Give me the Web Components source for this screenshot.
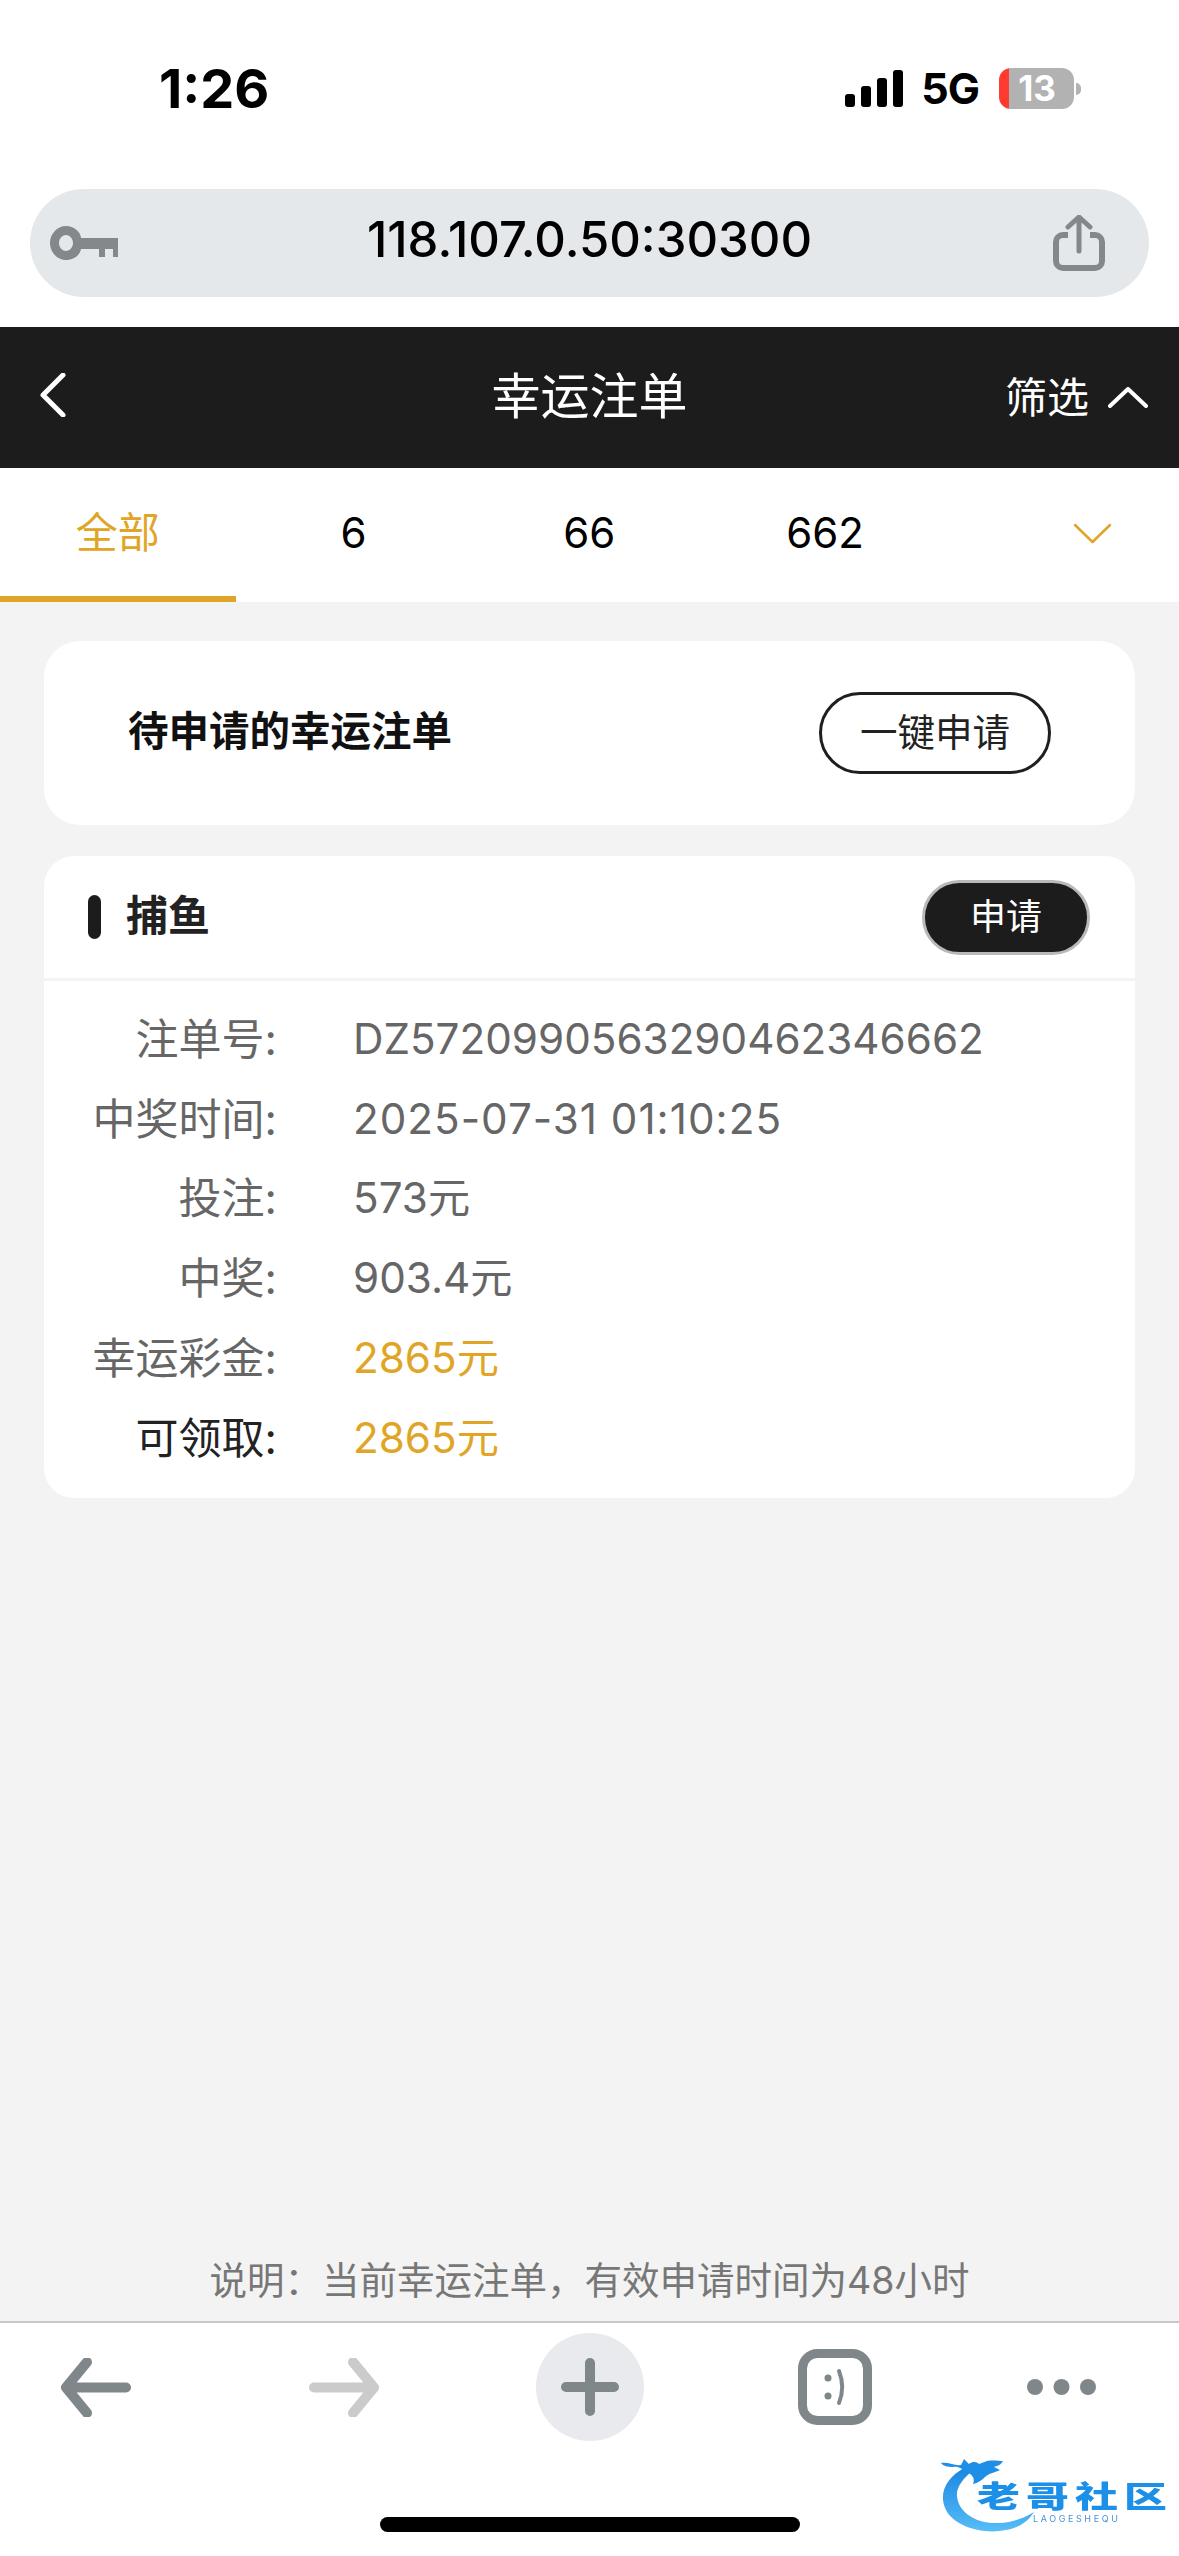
<!DOCTYPE html>
<html lang="zh">
<head>
<meta charset="utf-8">
<title>幸运注单</title>
<style>
  html, body { margin: 0; padding: 0; background: #fff; }
  body { width: 1179px; height: 2556px; overflow: hidden; font-family: Inter, "Noto Sans CJK SC", sans-serif; }
</style>
</head>
<body>
<lucky-page>
  <status-bar time="1:26" network="5G" battery="13"></status-bar>
  <url-bar address="118.107.0.50:30300"></url-bar>
  <nav-header heading="幸运注单" action="筛选"></nav-header>
  <filter-tabs items="全部,6,66,662"></filter-tabs>
  <apply-card heading="待申请的幸运注单" action="一键申请"></apply-card>
  <bet-card game="捕鱼" action="申请">
    <info-row label="注单号:" value="DZ5720990563290462346662"></info-row>
    <info-row label="中奖时间:" value="2025-07-31 01:10:25" spacing="1px"></info-row>
    <info-row label="投注:" value="573元"></info-row>
    <info-row label="中奖:" value="903.4元"></info-row>
    <info-row label="幸运彩金:" value="2865元" tone="gold"></info-row>
    <info-row label="可领取:" value="2865元" tone="gold" strong></info-row>
  </bet-card>
  <page-note>说明：当前幸运注单，有效申请时间为48小时</page-note>
  <browser-toolbar></browser-toolbar>
</lucky-page>

<script>
class LuckyPage extends HTMLElement {
  constructor() {
    super();
    this.attachShadow({ mode: "open" });
    this.shadowRoot.innerHTML = `
      <style>
        :host { display: block; width: 1179px; height: 2556px; background: #fff; position: relative; }
        .frame { display: flex; flex-direction: column; height: 100%; }
        .body { flex: 1; background: #f3f3f3; display: flex; flex-direction: column; padding: 39px 44px 0; gap: 31px; min-height: 0; }
        .note { margin-top: auto; height: 65px; }
      </style>
      <div class="frame">
        <slot name="top"></slot>
        <div class="body">
          <slot name="cards"></slot>
          <div class="note"><slot name="note"></slot></div>
        </div>
        <slot name="bottom"></slot>
      </div>
      <lucky-watermark></lucky-watermark>
    `;
  }

  connectedCallback() {
    for (const el of this.children) {
      const tag = el.localName;
      if (tag === "status-bar" || tag === "url-bar" || tag === "nav-header" || tag === "filter-tabs") el.slot = "top";
      if (tag === "apply-card" || tag === "bet-card") el.slot = "cards";
      if (tag === "page-note") el.slot = "note";
      if (tag === "browser-toolbar") el.slot = "bottom";
    }
  }
}

class StatusBar extends HTMLElement {
  constructor() {
    super();
    this.attachShadow({ mode: "open" });
  }

  connectedCallback() {
    const time = this.getAttribute("time") || "";
    const network = this.getAttribute("network") || "";
    const battery = this.getAttribute("battery") || "";
    this.shadowRoot.innerHTML = `
      <style>
        :host { display: flex; height: 189px; background: #fff; box-sizing: border-box; padding: 0 98px 12px 159px; align-items: center; justify-content: space-between; color: #000; }
        .time { font: 700 54px/1 Inter, sans-serif; }
        .right { display: flex; align-items: center; }
        svg { display: block; }
        .net { font: 700 43px/1 Inter, sans-serif; margin: 0 20px 0 18px; letter-spacing: -1px; }
        .battery { display: flex; align-items: center; }
        .cell { width: 75px; height: 41px; border-radius: 12px; overflow: hidden; background: linear-gradient(90deg, #ff3b30 10px, #b2b2b2 10px); color: #fff; font: 700 35px/41px Inter, sans-serif; text-align: center; text-indent: 1px; }
        .nub { width: 5px; height: 12px; margin-left: 2px; background: #b2b2b2; border-radius: 0 6px 6px 0; }
      </style>
      <span class="time">${time}</span>
      <div class="right">
        <svg width="58" height="37" viewBox="0 0 58 37" fill="#000">
          <rect x="0" y="24" width="10" height="13" rx="3"/>
          <rect x="16" y="16" width="10" height="21" rx="3"/>
          <rect x="32" y="8" width="10" height="29" rx="3"/>
          <rect x="48" y="0" width="10" height="37" rx="3"/>
        </svg>
        <span class="net">${network}</span>
        <div class="battery"><div class="cell">${battery}</div><div class="nub"></div></div>
      </div>
    `;
  }
}

class UrlBar extends HTMLElement {
  constructor() {
    super();
    this.attachShadow({ mode: "open" });
  }

  connectedCallback() {
    const address = this.getAttribute("address") || "";
    this.shadowRoot.innerHTML = `
      <style>
        :host { display: block; background: #fff; padding: 0 30px 30px; }
        .bar { height: 108px; border-radius: 54px; background: #e5e8eb; display: flex; align-items: center; justify-content: space-between; padding: 0 44px 0 20px; position: relative; }
        .addr { position: absolute; left: 0; right: 0; top: -3px; text-align: center; font: 500 49px/108px Inter, sans-serif; color: #000; }
        svg { display: block; position: relative; }
      </style>
      <div class="bar">
        <svg width="68" height="34" viewBox="0 0 68 34" fill="#82888b">
          <path fill-rule="evenodd" d="M16 0c9 0 15 7 15 12h37v19h-5v-8h-8v8h-6v-8H31c-1 6-7 11-15 11C7 34 0 26 0 17S7 0 16 0zm0 9c-4 0-7 4-7 8s3 8 7 8 7-4 7-8-3-8-7-8z"/>
        </svg>
        <span class="addr">${address}</span>
        <svg width="52" height="56" viewBox="0 0 52 56" fill="none" stroke="#82888b" stroke-width="6">
          <path d="M15 20H10a7 7 0 0 0-7 7v19a7 7 0 0 0 7 7h32a7 7 0 0 0 7-7V27a7 7 0 0 0-7-7h-5"/>
          <path d="M26 36V3M15 12 26 2l11 10" stroke-width="5" stroke-linecap="round" stroke-linejoin="round"/>
        </svg>
      </div>
    `;
  }
}

class NavHeader extends HTMLElement {
  constructor() {
    super();
    this.attachShadow({ mode: "open" });
  }

  connectedCallback() {
    const heading = this.getAttribute("heading") || "";
    const action = this.getAttribute("action") || "";
    this.shadowRoot.innerHTML = `
      <style>
        :host { display: grid; grid-template-columns: 1fr auto 1fr; align-items: center; height: 141px; background: #1c1c1c; color: #fff; padding: 0 31px; font-family: Inter, "Noto Sans CJK SC", sans-serif; }
        h1 { margin: 0; font-size: 49px; font-weight: 400; line-height: 1; position: relative; top: -1px; }
        .action { justify-self: end; display: flex; align-items: center; gap: 19px; font-size: 42px; line-height: 1; }
        svg { display: block; }
        .back { margin: -6px 0 0 9px; }
      </style>
      <svg class="back" width="26" height="44" viewBox="0 0 26 44" fill="none" stroke="#fff" stroke-width="5" stroke-linecap="round" stroke-linejoin="round"><path d="M23 2 3 22l20 20"/></svg>
      <h1>${heading}</h1>
      <div class="action"><span>${action}</span>
        <svg width="40" height="21" viewBox="0 0 40 21" fill="none" stroke="#fff" stroke-width="4" stroke-linecap="round" stroke-linejoin="round"><path d="M2 19 20 2l18 17"/></svg>
      </div>
    `;
  }
}

class FilterTabs extends HTMLElement {
  constructor() {
    super();
    this.attachShadow({ mode: "open" });
  }

  connectedCallback() {
    const items = (this.getAttribute("items") || "").split(",");
    const tabs = items.map((item, i) => `<div class="tab${i === 0 ? " on" : ""}">${item}</div>`).join("");
    this.shadowRoot.innerHTML = `
      <style>
        :host { display: grid; grid-template-columns: repeat(4, 235.75px) 1fr; height: 134px; background: #fff; font-family: Inter, "Noto Sans CJK SC", sans-serif; }
        .tab { display: flex; align-items: center; justify-content: center; font-size: 42px; line-height: 50px; color: #000; box-sizing: border-box; padding-top: 2px; border-bottom: 6px solid transparent; }
        .on { color: #e0a526; border-bottom-color: #e0a526; }
        .more { display: flex; align-items: center; justify-content: flex-end; padding: 0 67px 0 0; }
        svg { display: block; }
      </style>
      ${tabs}
      <div class="more">
        <svg width="39" height="21" viewBox="0 0 39 21" fill="none" stroke="#e0a526" stroke-width="2.5" stroke-linecap="round" stroke-linejoin="round" style="margin-top:-4px"><path d="M2 2l17.5 17L37 2"/></svg>
      </div>
    `;
  }
}

class ApplyCard extends HTMLElement {
  constructor() {
    super();
    this.attachShadow({ mode: "open" });
  }

  connectedCallback() {
    const heading = this.getAttribute("heading") || "";
    const action = this.getAttribute("action") || "";
    this.shadowRoot.innerHTML = `
      <style>
        :host { display: flex; align-items: center; justify-content: space-between; height: 184px; background: #fff; border-radius: 36px; padding: 0 84px; font-family: Inter, "Noto Sans CJK SC", sans-serif; }
        strong { font-size: 40.5px; font-weight: 700; color: #111; line-height: 50px; margin-top: -2px; }
        button { all: unset; box-sizing: border-box; width: 232px; height: 82px; border: 3px solid #1f1f1f; border-radius: 41px; text-align: center; font-size: 37.5px; line-height: 72px; color: #222; }
      </style>
      <strong>${heading}</strong>
      <button>${action}</button>
    `;
  }
}

class BetCard extends HTMLElement {
  constructor() {
    super();
    this.attachShadow({ mode: "open" });
  }

  connectedCallback() {
    const game = this.getAttribute("game") || "";
    const action = this.getAttribute("action") || "";
    this.shadowRoot.innerHTML = `
      <style>
        :host { display: block; background: #fff; border-radius: 30px; height: 642px; font-family: Inter, "Noto Sans CJK SC", sans-serif; }
        header { display: flex; align-items: center; height: 122px; padding: 0 45px 0 44px; border-bottom: 3px solid #f3f3f3; }
        .mark { width: 13px; height: 44px; border-radius: 7px; background: #1c1c1c; margin-right: 25px; }
        h2 { margin: -2px 0 0; flex: 1; font-size: 42px; line-height: 50px; font-weight: 700; color: #222; }
        button { all: unset; box-sizing: border-box; width: 168px; height: 75px; border-radius: 38px; background: #1c1c1c; border: 3px solid #b9b9b9; color: #fff; text-align: center; font-size: 36px; line-height: 69px; }
        .rows { padding: 18px 0 0; }
      </style>
      <header><span class="mark"></span><h2>${game}</h2><button>${action}</button></header>
      <div class="rows"><slot></slot></div>
    `;
  }
}

class InfoRow extends HTMLElement {
  constructor() {
    super();
    this.attachShadow({ mode: "open" });
  }

  connectedCallback() {
    const label = this.getAttribute("label") || "";
    const value = this.getAttribute("value") || "";
    const spacing = this.getAttribute("spacing") || "0";
    const gold = this.getAttribute("tone") === "gold";
    const strong = this.hasAttribute("strong");
    this.shadowRoot.innerHTML = `
      <style>
        :host { display: grid; grid-template-columns: 233px 1fr; column-gap: 76px; height: 79.8px; align-items: center; font-family: Inter, "Noto Sans CJK SC", sans-serif; font-size: 43px; line-height: 50px; }
        .k { text-align: right; color: ${strong ? "#222" : "#666"}; }
        .v { font-size: 42.2px; color: ${gold ? "#e0a526" : "#666"}; white-space: nowrap; letter-spacing: ${spacing}; }
      </style>
      <span class="k">${label}</span>
      <span class="v">${value}</span>
    `;
  }
}

class PageNote extends HTMLElement {
  constructor() {
    super();
    this.attachShadow({ mode: "open" });
    this.shadowRoot.innerHTML = `
      <style>
        :host { display: block; text-align: center; font-family: Inter, "Noto Sans CJK SC", sans-serif; font-size: 37.5px; line-height: 50px; color: #777; margin: 0 -44px; }
      </style>
      <slot></slot>
    `;
  }
}

class BrowserToolbar extends HTMLElement {
  constructor() {
    super();
    this.attachShadow({ mode: "open" });
    this.shadowRoot.innerHTML = `
      <style>
        :host { display: block; height: 235px; box-sizing: border-box; background: #fff; border-top: 2px solid #c8c8c8; }
        .icons { display: flex; align-items: center; height: 128px; }
        svg { display: block; flex: none; }
        .back { margin-left: 60px; }
        .forward { margin-left: 178px; }
        .plus { margin-left: 156px; width: 108px; height: 108px; border-radius: 50%; background: #e9eaee; display: flex; align-items: center; justify-content: center; }
        .tabs { margin-left: 154px; }
        .more { margin-left: 155px; }
        .home { width: 420px; height: 15px; border-radius: 8px; background: #000; margin: 66px auto 0; }
      </style>
      <div class="icons">
        <svg class="back" width="71" height="59" viewBox="0 0 71 59" fill="none" stroke="#80878a" stroke-width="10" stroke-linecap="round" stroke-linejoin="round"><path d="M66 29.5H6M27 4 6 29.5 27 55"/></svg>
        <svg class="forward" width="71" height="59" viewBox="0 0 71 59" fill="none" stroke="#cbcbcb" stroke-width="10" stroke-linecap="round" stroke-linejoin="round"><path d="M5 29.5h60M44 4l21 25.5L44 55"/></svg>
        <div class="plus"><svg width="58" height="58" viewBox="0 0 58 58" fill="none" stroke="#80878a" stroke-width="10" stroke-linecap="round"><path d="M29 5v48M5 29h48"/></svg></div>
        <svg class="tabs" width="74" height="76" viewBox="0 0 74 76" fill="none" stroke="#80878a"><rect x="4.5" y="4.5" width="65" height="67" rx="15" stroke-width="9"/><circle cx="30" cy="29" r="3.5" fill="#80878a" stroke="none"/><circle cx="30" cy="47" r="3.5" fill="#80878a" stroke="none"/><path d="M41 22c4 10 4 22 0 32" stroke-width="4" stroke-linecap="round"/></svg>
        <svg class="more" width="69" height="18" viewBox="0 0 69 18" fill="#80878a"><circle cx="8" cy="9" r="8"/><circle cx="34.5" cy="9" r="8"/><circle cx="61" cy="9" r="8"/></svg>
      </div>
      <div class="home"></div>
    `;
  }
}

class LuckyWatermark extends HTMLElement {
  constructor() {
    super();
    this.attachShadow({ mode: "open" });
    this.shadowRoot.innerHTML = `
      <style>
        :host { position: absolute; left: 940px; top: 2452px; width: 226px; height: 84px; display: block; filter: blur(0.7px); }
        svg { position: absolute; left: 0; top: 0; }
        .name { position: absolute; left: 42px; top: 29px; width: 180px; display: flex; justify-content: space-between; font: 900 33px/27px "Noto Sans CJK SC", sans-serif; color: #1c8fe8; }
        .name span { display: inline-block; transform: scale(1.3, .9); }
        .en { position: absolute; left: 93px; top: 62px; font: 400 9px/10px Inter, sans-serif; letter-spacing: 2.6px; color: #4a92d8; }
      </style>
      <svg width="226" height="84" viewBox="0 0 226 84">
        <defs><linearGradient id="arc" x1="0" y1="0" x2="0" y2="1"><stop offset="0" stop-color="#1b86e3"/><stop offset="1" stop-color="#56bdf6"/></linearGradient></defs>
        <path d="M24 16C6 26-2 42 6 58c8 16 36 25 60 20 12-2 22-8 28-18-10 6-22 11-36 11C36 72 18 60 17 44c-1-9 7-18 14-24z" fill="url(#arc)"/>
        <path d="M1 11c8-1 14 3 20 2l3-6 5 5c4-3 8-2 10 0l8-3c6-1 12 0 16 0-2 4-6 5-9 6l6 3c-6 3-11 3-15 7-3 3-7 6-12 7 2-5 0-9-6-12-6-3-8-6-14-5C8 15 3 14 1 11z" fill="#1f8ee6"/>
      </svg>
      <div class="name"><span>老</span><span>哥</span><span>社</span><span>区</span></div>
      <div class="en">LAOGESHEQU</div>
    `;
  }
}

customElements.define("status-bar", StatusBar);
customElements.define("url-bar", UrlBar);
customElements.define("nav-header", NavHeader);
customElements.define("filter-tabs", FilterTabs);
customElements.define("apply-card", ApplyCard);
customElements.define("info-row", InfoRow);
customElements.define("bet-card", BetCard);
customElements.define("page-note", PageNote);
customElements.define("browser-toolbar", BrowserToolbar);
customElements.define("lucky-watermark", LuckyWatermark);
customElements.define("lucky-page", LuckyPage);
</script>
</body>
</html>
